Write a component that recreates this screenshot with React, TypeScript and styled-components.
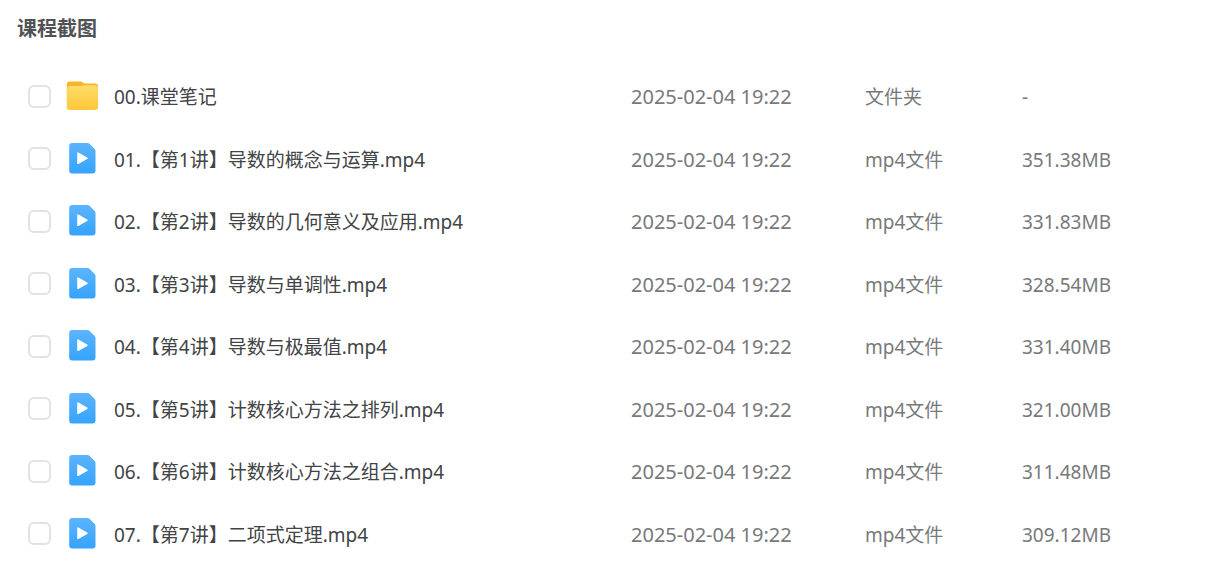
import React, { useState } from 'react';
import styled, { createGlobalStyle } from 'styled-components';

const GlobalStyle = createGlobalStyle`
  * { box-sizing: border-box; }
  body {
    margin: 0;
    background: #ffffff;
    font-family: 'Noto Sans', 'Noto Sans CJK SC', sans-serif;
  }
`;

const Page = styled.main`
  padding: 15px 0 0;
`;

const Title = styled.h1`
  margin: 0;
  padding-left: 17px;
  font-size: 20px;
  line-height: 28px;
  font-weight: 700;
  color: #505254;
`;

const ListArea = styled.section`
  padding: 22px 0 0 28px;
`;

const FileTable = styled.table`
  width: 100%;
  height: 500px;
  table-layout: fixed;
  border-collapse: collapse;
`;

const Column = styled.col<{ $width?: number }>`
  width: ${({ $width }) => ($width ? `${$width}px` : 'auto')};
`;

const Cell = styled.td`
  padding: 0;
  vertical-align: middle;
`;

const TextCell = styled(Cell)<{ $size?: number }>`
  padding-top: 2px;
  font-size: ${({ $size }) => $size ?? 19}px;
  line-height: 28px;
  color: #77797b;
  white-space: nowrap;
`;

const Checkbox = styled.input`
  appearance: none;
  display: block;
  width: 23px;
  height: 23px;
  margin: 0;
  border: 2px solid #dfe3e7;
  border-radius: 6px;
  background: #ffffff;
  cursor: pointer;

  &:checked {
    border-color: #3ba4fb;
    background: #3ba4fb;
  }
`;

const NameLabel = styled.label`
  display: flex;
  align-items: center;
  gap: 16px;
  cursor: pointer;
`;

const FileName = styled.span`
  padding-top: 2px;
  font-size: 19px;
  line-height: 28px;
  color: #424446;
  white-space: nowrap;
`;

const Icon = styled.svg`
  display: block;
  flex: none;
  width: 32px;
  height: 32px;
`;

function FolderIcon() {
  return (
    <Icon viewBox="0 0 32 32" aria-hidden="true">
      <defs>
        <linearGradient id="folderFront" x1="0" y1="0" x2="0" y2="1">
          <stop offset="0" stopColor="#ffdc68" />
          <stop offset="1" stopColor="#ffc839" />
        </linearGradient>
      </defs>
      <path d="M.8 4.500a3 3 0 0 1 3-3h10.700q1.200 0 2 .7l1 .7q.8.600 2 .6h9.700a3 3 0 0 1 3 3v9H.8z" fill="#f9b42a" />
      <path d="M.8 9a3 3 0 0 1 3-3h11.200q1.500 0 2.500-.4 1-.3 2.500-.3h9.200a3 3 0 0 1 3 3v18.700a3 3 0 0 1-3 3H3.800a3 3 0 0 1-3-3z" fill="url(#folderFront)" />
    </Icon>
  );
}

function VideoIcon() {
  return (
    <Icon viewBox="0 0 32 32" aria-hidden="true">
      <defs>
        <linearGradient id="videoSheet" x1="0" y1="0" x2="0" y2="1">
          <stop offset="0" stopColor="#5db4ff" />
          <stop offset="1" stopColor="#35a3fc" />
        </linearGradient>
      </defs>
      <path d="M3.200 3a3 3 0 0 1 3-3h15.300q1.200 0 2 .8l5.200 5.200q.8.800.8 2V27.500a3 3 0 0 1-3 3H6.200a3 3 0 0 1-3-3z" fill="url(#videoSheet)" />
      <path d="M11.200 10.200v10q0 1.300 1.200.7l8.800-4.900q1.200-.8 0-1.600l-8.800-4.900q-1.200-.6-1.200.7z" fill="#ffffff" />
    </Icon>
  );
}

interface FileEntry {
  name: string;
  type: string;
  size: string;
  folder?: boolean;
}

const files: FileEntry[] = [
  { name: '00.课堂笔记', type: '文件夹', size: '-', folder: true },
  { name: '01.【第1讲】导数的概念与运算.mp4', type: 'mp4文件', size: '351.38MB' },
  { name: '02.【第2讲】导数的几何意义及应用.mp4', type: 'mp4文件', size: '331.83MB' },
  { name: '03.【第3讲】导数与单调性.mp4', type: 'mp4文件', size: '328.54MB' },
  { name: '04.【第4讲】导数与极最值.mp4', type: 'mp4文件', size: '331.40MB' },
  { name: '05.【第5讲】计数核心方法之排列.mp4', type: 'mp4文件', size: '321.00MB' },
  { name: '06.【第6讲】计数核心方法之组合.mp4', type: 'mp4文件', size: '311.48MB' },
  { name: '07.【第7讲】二项式定理.mp4', type: 'mp4文件', size: '309.12MB' },
];

export default function App() {
  const [selected, setSelected] = useState<string[]>([]);

  const toggle = (name: string) =>
    setSelected((current) =>
      current.includes(name) ? current.filter((n) => n !== name) : [...current, name],
    );

  return (
    <>
      <GlobalStyle />
      <Page>
        <Title>课程截图</Title>
        <ListArea>
          <FileTable>
            <colgroup>
              <Column $width={38} />
              <Column />
              <Column $width={234} />
              <Column $width={157} />
              <Column $width={210} />
            </colgroup>
            <tbody>
              {files.map((file, index) => (
                <tr key={file.name}>
                  <Cell>
                    <Checkbox
                      type="checkbox"
                      id={`file-${index}`}
                      checked={selected.includes(file.name)}
                      onChange={() => toggle(file.name)}
                    />
                  </Cell>
                  <Cell>
                    <NameLabel htmlFor={`file-${index}`}>
                      {file.folder ? <FolderIcon /> : <VideoIcon />}
                      <FileName>{file.name}</FileName>
                    </NameLabel>
                  </Cell>
                  <TextCell $size={20}>2025-02-04 19:22</TextCell>
                  <TextCell>{file.type}</TextCell>
                  <TextCell>{file.size}</TextCell>
                </tr>
              ))}
            </tbody>
          </FileTable>
        </ListArea>
      </Page>
    </>
  );
}
